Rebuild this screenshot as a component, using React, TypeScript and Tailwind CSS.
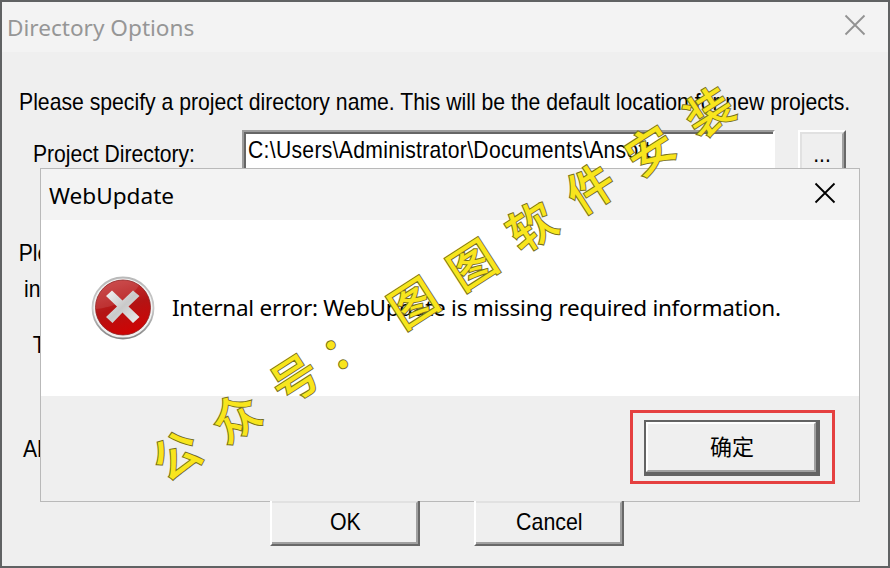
import React from 'react';

const uiFont = "font-['Liberation_Sans',sans-serif]";

function CloseIcon({ className }: { className: string }) {
  return (
    <svg className={className} width="22" height="22" viewBox="0 0 22 22" fill="none" stroke="currentColor">
      <path d="M1.5 1.5L20.5 20.5M20.5 1.5L1.5 20.5" strokeWidth={1.8} />
    </svg>
  );
}

function ErrorIcon() {
  return (
    <svg width="64" height="64" viewBox="0 0 64 64">
      <defs>
        <linearGradient id="ring" x1="0" y1="0" x2="0" y2="1">
          <stop offset="0" stopColor="#b9b9b9" />
          <stop offset="0.5" stopColor="#c9c9c9" />
          <stop offset="1" stopColor="#858585" />
        </linearGradient>
        <linearGradient id="disc" x1="0.3" y1="0" x2="0.6" y2="1">
          <stop offset="0" stopColor="#c5393a" />
          <stop offset="0.5" stopColor="#b31414" />
          <stop offset="1" stopColor="#d00303" />
        </linearGradient>
        <linearGradient id="cross" x1="0" y1="0" x2="1" y2="1">
          <stop offset="0" stopColor="#f4f4f4" />
          <stop offset="0.5" stopColor="#c9c9c9" />
          <stop offset="1" stopColor="#eeeeee" />
        </linearGradient>
      </defs>
      <circle cx="32" cy="32" r="30.5" fill="#f1f1f1" stroke="url(#ring)" strokeWidth="1.8" />
      <circle cx="32" cy="31.5" r="27.5" fill="url(#disc)" stroke="#8f2020" strokeWidth="0.8" />
      <path d="M4.8 33C17 32 36 27 48 9.5A27.2 27.2 0 0 0 4.8 33Z" fill="#fff" opacity="0.1" />
      <path
        d="M21 14.5L31.5 24.5L42 14.5L48.5 20L37.5 30.5L48.5 41L42 47L31.5 36.5L21.5 47L15 41L26 30.5L15 20Z"
        fill="url(#cross)"
      />
    </svg>
  );
}

function DialogButton({ children }: { children: React.ReactNode }) {
  return (
    <button className="relative z-10 h-[45px] w-[150px] border-r-2 border-b-2 border-l-2 border-r-[#686868] border-b-[#686868] border-l-white bg-[#efefef]">
      <span className="flex h-full items-center justify-center border-t-2 border-r-2 border-b-2 border-t-[#e1e1e1] border-r-[#a0a0a0] border-b-[#a0a0a0] pb-0.5 pl-0.5">
        <span className="scale-x-[0.89]">{children}</span>
      </span>
    </button>
  );
}

function WebUpdateDialog() {
  return (
    <section className="absolute top-[168px] left-10 flex h-[334px] w-[820px] flex-col border border-[#b9b9b9] bg-[#efefef] font-['Noto_Sans',sans-serif] text-black">
      <header className="flex h-[51px] items-center justify-between bg-[#f3f3f3] pr-[23px] pl-2">
        <h2 className="pt-0.5 text-[22.6px] leading-8">WebUpdate</h2>
        <CloseIcon className="mb-[3px] text-black" />
      </header>
      <div className="flex h-[176px] items-center bg-white pl-[50px]">
        <ErrorIcon />
        <p className="pl-[17px] text-[22.5px] leading-8 tracking-[-0.26px] whitespace-nowrap">
          Internal error: WebUpdate is missing required information.
        </p>
      </div>
      <footer className="flex flex-1 items-start justify-end pt-[14px] pr-6">
        <div className="h-[74px] w-[205px] border-3 border-[#e54040] px-[11px] py-[7px]">
          <button className="block h-[56px] w-[176px] border-t-2 border-r-4 border-b-4 border-l-2 border-[#636363]">
            <span className="flex h-full items-center justify-center border-2 border-t-white border-r-[#a0a0a0] border-b-[#a0a0a0] border-l-white pb-1 pl-0.5 font-['Noto_Sans_CJK_SC',sans-serif] text-[22px]">
              确定
            </span>
          </button>
        </div>
      </footer>
    </section>
  );
}

export default function App() {
  return (
    <main className={`relative h-[568px] w-[890px] overflow-hidden border-2 border-[#606263] bg-[#efefef] text-[24px] leading-9 text-black ${uiFont}`}>
      {/* Directory Options window */}
      <header className="flex h-[50px] items-center justify-between bg-[#f3f3f3] pr-[22px] pl-[5px]">
        <h1 className="pt-0.5 font-['Noto_Sans',sans-serif] text-[22.6px] leading-8 text-[#969696]">Directory Options</h1>
        <CloseIcon className="mb-1 text-[#929292]" />
      </header>

      <p className="mt-8 ml-[17px] w-max origin-left scale-x-[0.883] whitespace-nowrap">
        Please specify a project directory name. This will be the default location for new projects.
      </p>
      <div className="mt-2.5 flex h-[46px] items-start pl-[31px]">
        <label className="mt-1.5 w-[209px] origin-left scale-x-[0.88]">Project Directory:</label>
        <div className="h-[46px] w-[533px] border-2 border-t-[#9c9c9c] border-r-white border-b-white border-l-[#9c9c9c]">
          <div className="h-full border-t-2 border-l-2 border-[#666] bg-white pl-0.5">
            <p className="w-max origin-left scale-x-[0.88] leading-8 tracking-[0.35px]">
              C:\Users\Administrator\Documents\Ansoft
            </p>
          </div>
        </div>
        <button className="ml-[23px] h-[46px] w-[48px] border-2 border-t-white border-r-[#686868] border-b-[#686868] border-l-white">
          <span className="flex h-full items-center justify-center border-t-2 border-r-2 border-l-2 border-t-[#e1e1e1] border-r-[#a0a0a0] border-l-[#e1e1e1]">
            <span className="scale-x-[0.88]">...</span>
          </span>
        </button>
      </div>

      <div className="mt-[59px] flex origin-left scale-x-[0.88] flex-col pl-[19px]">
        <p>Ple</p>
        <p className="pl-1.5">in</p>
        <p className="mt-5 pl-4">T</p>
        <p className="mt-[68px] pl-[5px]">Al</p>
      </div>

      <div className="mt-[34px] flex gap-[54px] pl-[268px]">
        <DialogButton>OK</DialogButton>
        <DialogButton>Cancel</DialogButton>
      </div>

      <div className="absolute -top-0.5 -left-0.5">
        <WebUpdateDialog />
      </div>

      {/* Watermark */}
      <div className="pointer-events-none absolute top-[234px] left-[96px] z-20 w-[720px] -rotate-[32.8deg] text-[47px] leading-[70px] font-medium tracking-[23.4px] whitespace-nowrap text-[#f8e51d] [paint-order:stroke_fill] [-webkit-text-stroke:2px_#77701f] [stroke-linejoin:round] font-['Noto_Sans_CJK_SC',sans-serif]">
        公众号<span className="relative -left-2.5">：</span>图图软件安装
      </div>
    </main>
  );
}
